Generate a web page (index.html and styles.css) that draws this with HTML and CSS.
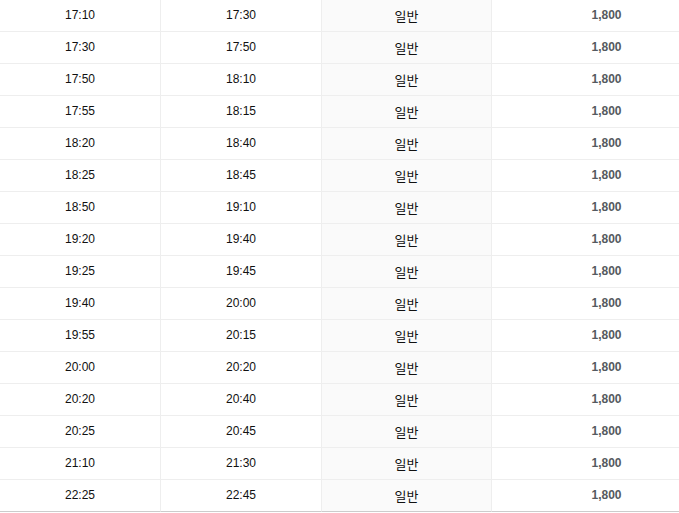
FILE: index.html
```html
<!DOCTYPE html>
<html lang="ko">
<head>
<meta charset="utf-8">
<title>시간표</title>
<link rel="stylesheet" href="styles.css">
</head>
<body>
<table class="timetable">
  <colgroup>
    <col class="c-dep"><col class="c-arr"><col class="c-type"><col class="c-fare">
  </colgroup>
  <tbody>
    <tr><td>17:10</td><td>17:30</td><td class="type">일반</td><td class="fare">1,800</td></tr>
    <tr><td>17:30</td><td>17:50</td><td class="type">일반</td><td class="fare">1,800</td></tr>
    <tr><td>17:50</td><td>18:10</td><td class="type">일반</td><td class="fare">1,800</td></tr>
    <tr><td>17:55</td><td>18:15</td><td class="type">일반</td><td class="fare">1,800</td></tr>
    <tr><td>18:20</td><td>18:40</td><td class="type">일반</td><td class="fare">1,800</td></tr>
    <tr><td>18:25</td><td>18:45</td><td class="type">일반</td><td class="fare">1,800</td></tr>
    <tr><td>18:50</td><td>19:10</td><td class="type">일반</td><td class="fare">1,800</td></tr>
    <tr><td>19:20</td><td>19:40</td><td class="type">일반</td><td class="fare">1,800</td></tr>
    <tr><td>19:25</td><td>19:45</td><td class="type">일반</td><td class="fare">1,800</td></tr>
    <tr><td>19:40</td><td>20:00</td><td class="type">일반</td><td class="fare">1,800</td></tr>
    <tr><td>19:55</td><td>20:15</td><td class="type">일반</td><td class="fare">1,800</td></tr>
    <tr><td>20:00</td><td>20:20</td><td class="type">일반</td><td class="fare">1,800</td></tr>
    <tr><td>20:20</td><td>20:40</td><td class="type">일반</td><td class="fare">1,800</td></tr>
    <tr><td>20:25</td><td>20:45</td><td class="type">일반</td><td class="fare">1,800</td></tr>
    <tr><td>21:10</td><td>21:30</td><td class="type">일반</td><td class="fare">1,800</td></tr>
    <tr class="last"><td>22:25</td><td>22:45</td><td class="type">일반</td><td class="fare">1,800</td></tr>
  </tbody>
</table>
</body>
</html>
```
FILE: styles.css
```css
html, body {
  margin: 0;
  padding: 0;
  background: #fff;
}
.timetable {
  width: 679px;
  border-collapse: separate;
  border-spacing: 0;
  table-layout: fixed;
  font-family: "Liberation Sans", "Noto Sans CJK KR", sans-serif;
  font-size: 12px;
  color: #111;
}
.c-dep { width: 161px; }
.c-arr { width: 161px; }
.c-type { width: 170px; }
.c-fare { width: 187px; }
.timetable td {
  height: 31px;
  padding: 0;
  text-align: center;
  vertical-align: middle;
  border-right: 1px solid #eee;
  border-bottom: 1px solid #eee;
  line-height: 31px;
}
.timetable td:last-child { border-right: none; }
.timetable .type {
  background: #fafafa;
  font-family: "Noto Sans CJK KR", sans-serif;
  font-size: 13px;
}
.timetable .fare {
  font-weight: bold;
  color: #555a60;
  padding-left: 42px;
}
.timetable .last td { border-bottom-color: #ccc; }
```
